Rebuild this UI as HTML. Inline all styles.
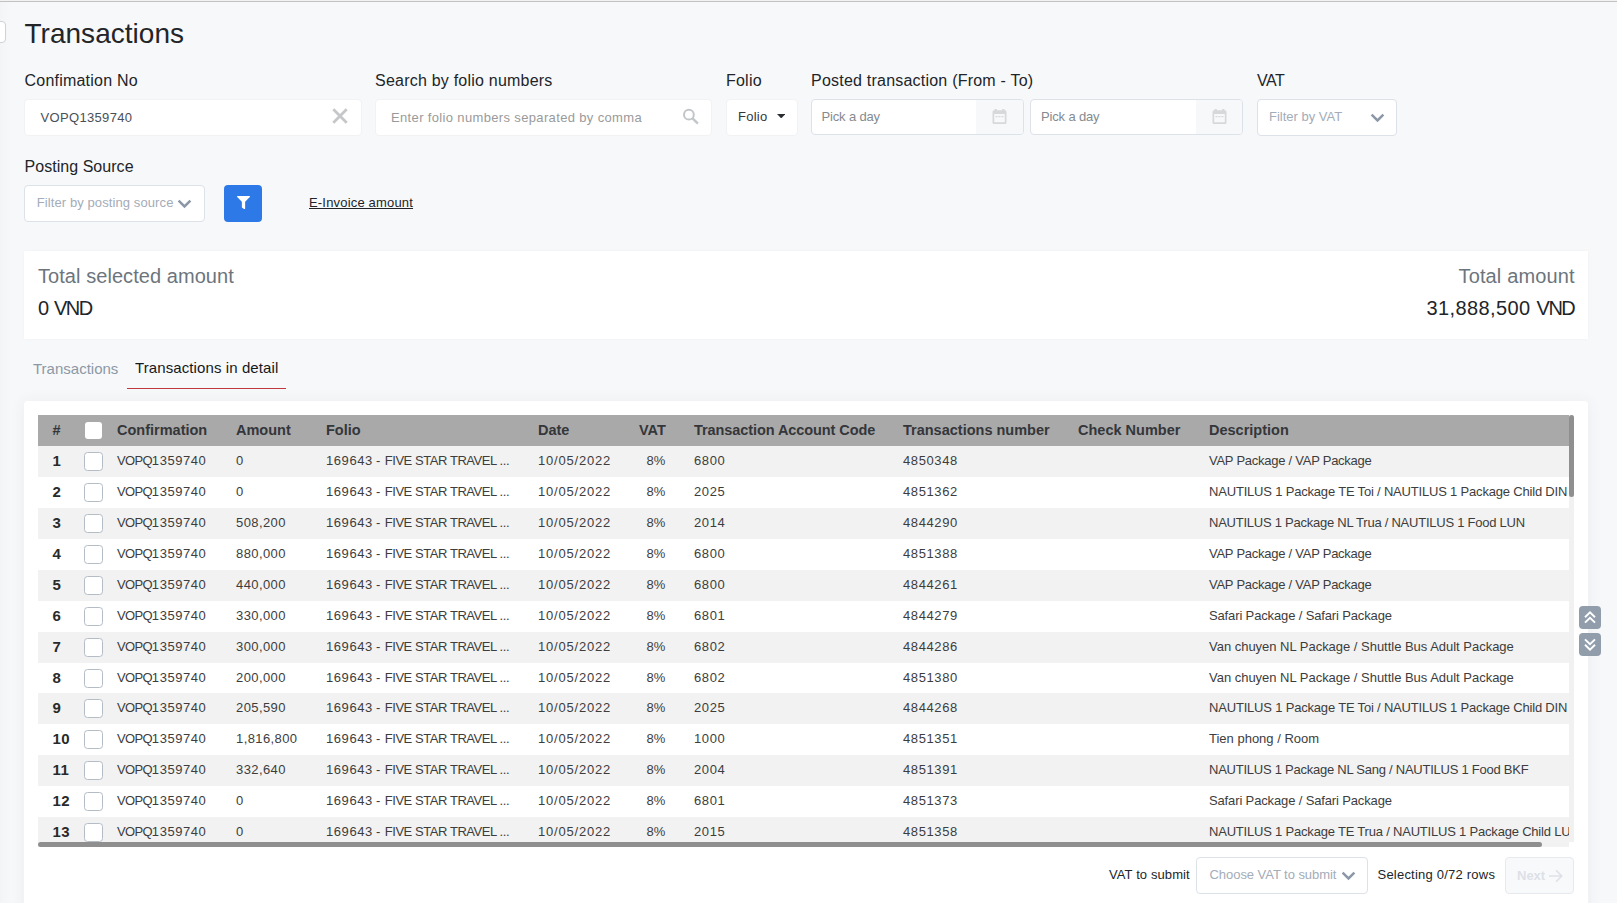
<!DOCTYPE html>
<html lang="en">
<head>
<meta charset="utf-8">
<title>Transactions</title>
<style>
*{box-sizing:border-box;margin:0;padding:0}
html,body{width:1617px;height:903px;overflow:hidden}
body{background:#f7f8fa;font-family:"Liberation Sans",sans-serif;color:#212529;position:relative}
.abs{position:absolute}
.topline{position:absolute;left:0;top:0;width:1617px;height:2px;background:linear-gradient(#f2f2f2 0 1px,#c2c2c2 1px 2px)}
.leftbox{position:absolute;left:-10px;top:21px;width:16px;height:22px;background:#fff;border:1px solid #ced2d6;border-radius:4px}
h1{position:absolute;left:24.5px;top:18px;font-size:28px;font-weight:400;line-height:32px;letter-spacing:.02px;color:#232528;white-space:nowrap}
.lbl{position:absolute;font-size:16px;line-height:20px;color:#212529;white-space:nowrap;letter-spacing:.22px}
.inp{position:absolute;background:#fff;border:1px solid #f0f2f4;border-radius:4px;height:37px;top:99px}
.v{position:absolute;left:16px;top:10px;font-size:13px;line-height:16px;color:#495057;white-space:nowrap;letter-spacing:.33px}
.ph{color:#9a9a9a}
.sel{position:absolute;background:#fff;border:1px solid #dde1e8;border-radius:4px;height:37px}
.card{position:absolute;background:#fff;border-radius:4px}
.sum{position:absolute;font-size:20px;line-height:24px;white-space:nowrap}
.tab{position:absolute;font-size:15px;line-height:20px;white-space:nowrap}
/* table */
.tbl{position:absolute;left:38px;top:415px;width:1536px;height:432px;overflow:hidden}
.th{position:absolute;left:0;top:0;width:1531px;height:31px;background:#a9a9a9}
.th span{position:absolute;top:6px;font-size:14.5px;line-height:18px;font-weight:700;color:#34363a;white-space:nowrap}
.r{position:absolute;left:0;width:1531px;height:31px;background:#fff;overflow:hidden}
.r:nth-of-type(even){background:#f2f2f2}
.c{position:absolute;top:7px;font-size:13px;line-height:16px;color:#3d3d3d;white-space:nowrap}
.n{left:14.5px;font-size:15px;font-weight:700;top:7px;color:#2a2a2a;letter-spacing:.5px}
.cb{position:absolute;left:46px;top:6px;width:18.5px;height:18.5px;border:1px solid #b4bcc6;border-radius:3.5px;background:#fff}
.cf{left:79px;letter-spacing:.54px}.cf b{font-weight:400;letter-spacing:-.68px}
.am{left:198px;letter-spacing:.4px}
.fo{left:288px;letter-spacing:-.44px}.fo b{font-weight:400;letter-spacing:.58px}.fo i{font-style:normal;letter-spacing:.35px}
.da{left:500px;letter-spacing:.8px}
.va{left:608.5px;letter-spacing:0}
.co{left:656px;letter-spacing:.6px}
.tn{left:865px;letter-spacing:.6px}
.de{left:1171px;letter-spacing:-.18px}
.bt{position:absolute;font-size:13px;line-height:16px;color:#212529;white-space:nowrap}
.fl{position:absolute;left:1579px;width:22px;height:23px;background:#919dab;border-radius:4px}
</style>
</head>
<body>
<div class="abs" style="left:0;top:0;width:12px;height:903px;background:linear-gradient(to right,rgba(0,0,0,.014),rgba(0,0,0,0))"></div>
<div class="topline"></div>
<div class="leftbox"></div>
<h1>Transactions</h1>

<div class="lbl" style="left:24.5px;top:71px">Confimation No</div>
<div class="lbl" style="left:375px;top:71px">Search by folio numbers</div>
<div class="lbl" style="left:726px;top:71px">Folio</div>
<div class="lbl" style="left:811px;top:71px">Posted transaction (From - To)</div>
<div class="lbl" style="left:1257px;top:71px;letter-spacing:-.5px">VAT</div>

<div class="inp" style="left:24px;width:338px"><span class="v" style="left:15.5px;top:10px">VOPQ1359740</span>
<svg class="abs" style="left:305px;top:6px" width="20" height="20" viewBox="0 0 20 20"><path d="M3.3 3.3L16.7 16.7M16.7 3.3L3.3 16.7" stroke="#c5c7c9" stroke-width="2.8" fill="none"/></svg></div>
<div class="inp" style="left:375px;width:337px"><span class="v ph" style="left:15px;top:10px;letter-spacing:.35px">Enter folio numbers separated by comma</span>
<svg class="abs" style="left:306px;top:7.5px" width="18" height="18" viewBox="0 0 18 18"><circle cx="6.9" cy="6.7" r="4.9" stroke="#c3c6c9" stroke-width="2" fill="none"/><path d="M10.6 10.4L15.9 15.7" stroke="#c3c6c9" stroke-width="2.4" fill="none"/></svg></div>

<div class="inp" style="left:726px;width:72px"><span class="v" style="left:11px;top:9px;color:#33363a;letter-spacing:.25px">Folio</span>
<svg class="abs" style="left:50px;top:13.6px" width="8.4" height="4.4" viewBox="0 0 8.4 4.4"><path d="M0 0H8.4L4.2 4.4Z" fill="#2b2d30"/></svg></div>

<div class="sel" style="left:811px;top:99px;width:213px;height:36px"><span class="v" style="left:9.5px;top:9px;color:#858a90;letter-spacing:-.15px">Pick a day</span><div class="abs" style="left:164px;top:0;width:47px;height:34px;background:#f7f8fa;border-radius:0 3px 3px 0"><svg class="abs" style="left:16px;top:9px" width="15" height="15" viewBox="0 0 15 15"><path d="M2.6 0h2.2v1.3h5.4V0h2.2v1.3h.6a1.5 1.5 0 0 1 1.5 1.5v10.6a1.5 1.5 0 0 1-1.5 1.5H2a1.5 1.5 0 0 1-1.5-1.5V2.8A1.5 1.5 0 0 1 2 1.3h.6zM2.2 5v8.3h10.6V5z" fill="#d7d8da" fill-rule="evenodd"/><path d="M3.5 7.6h8" stroke="#d7d8da" stroke-width="1.2" stroke-dasharray="2 1" fill="none"/></svg></div></div>
<div class="sel" style="left:1030px;top:99px;width:213px;height:36px"><span class="v" style="left:10px;top:9px;color:#858a90;letter-spacing:-.15px">Pick a day</span><div class="abs" style="left:165px;top:0;width:46px;height:34px;background:#f7f8fa;border-radius:0 3px 3px 0"><svg class="abs" style="left:15.8px;top:9px" width="15" height="15" viewBox="0 0 15 15"><path d="M2.6 0h2.2v1.3h5.4V0h2.2v1.3h.6a1.5 1.5 0 0 1 1.5 1.5v10.6a1.5 1.5 0 0 1-1.5 1.5H2a1.5 1.5 0 0 1-1.5-1.5V2.8A1.5 1.5 0 0 1 2 1.3h.6zM2.2 5v8.3h10.6V5z" fill="#d7d8da" fill-rule="evenodd"/><path d="M3.5 7.6h8" stroke="#d7d8da" stroke-width="1.2" stroke-dasharray="2 1" fill="none"/></svg></div></div>
<div class="sel" style="left:1257px;top:99px;width:140px"><span class="v" style="left:11px;top:9px;color:#a3acb8;letter-spacing:0">Filter by VAT</span><svg class="abs" style="left:111.7px;top:12.6px" width="15" height="10" viewBox="0 0 15 10"><path d="M1.6 1.6L7.5 7.4L13.4 1.6" stroke="#8c98a8" stroke-width="2.5" fill="none"/></svg></div>

<div class="lbl" style="left:24.5px;top:157px;letter-spacing:.04px">Posting Source</div>
<div class="sel" style="left:24px;top:185px;width:181px"><span class="v" style="left:11.7px;top:9px;color:#a3acb8;letter-spacing:.1px">Filter by posting source</span><svg class="abs" style="left:152.4px;top:12.5px" width="15" height="10" viewBox="0 0 15 10"><path d="M1.6 1.6L7.5 7.4L13.4 1.6" stroke="#8c98a8" stroke-width="2.5" fill="none"/></svg></div>
<div class="abs" style="left:224px;top:185px;width:38px;height:37px;background:#2e79e8;border-radius:4px"><svg class="abs" style="left:13.4px;top:11px" width="13" height="13.2" viewBox="0 0 512 512" preserveAspectRatio="none"><path d="M487.976 0H24.028C2.71 0-8.047 25.866 7.058 40.971L192 225.941V432c0 7.831 3.821 15.17 10.237 19.662l80 55.98C298.02 518.69 320 507.493 320 487.98V225.941l184.947-184.97C520.021 25.896 509.338 0 487.976 0z" fill="#fff"/></svg></div>
<div class="abs" style="left:309px;top:195px;font-size:13px;line-height:16px;color:#212529;text-decoration:underline;white-space:nowrap;letter-spacing:.18px">E-Invoice amount</div>

<div class="card" style="left:24px;top:251px;width:1564px;height:88px;border-radius:0;box-shadow:0 0 3px 0 rgba(69,65,78,.03)"></div>
<div class="sum" style="left:38px;top:264px;color:#6c757d;letter-spacing:.06px">Total selected amount</div>
<div class="sum" style="left:38px;top:296px;color:#212529;letter-spacing:-.4px">0 <span style="letter-spacing:-1.5px">VND</span></div>
<div class="sum" style="left:1458.5px;top:264px;color:#6c757d;letter-spacing:.14px">Total amount</div>
<div class="sum" style="left:1426.5px;top:296px;color:#212529;letter-spacing:.4px">31,888,500 <span style="letter-spacing:-1.5px">VND</span></div>

<div class="tab" style="left:33px;top:359px;color:#8c98a5">Transactions</div>
<div class="tab" style="left:135px;top:358px;color:#16181b;letter-spacing:.1px">Transactions in detail</div>
<div class="abs" style="left:127px;top:388px;width:159px;height:1px;background:#c0393f"></div>

<div class="card" style="left:24px;top:401px;width:1564px;height:520px;box-shadow:0 1px 15px 1px rgba(69,65,78,.06)"></div>
<div class="abs" style="left:1569px;top:415px;width:5px;height:427px;background:#f1f1f1"></div>
<div class="abs" style="left:38px;top:842px;width:1531px;height:5px;background:#f1f1f1"></div>
<div class="tbl">
<div class="th"><span style="left:14.5px">#</span><i class="abs" style="left:47px;top:7px;width:17px;height:17px;background:#fff;border-radius:3px"></i><span style="left:79px">Confirmation</span><span style="left:198px">Amount</span><span style="left:288px">Folio</span><span style="left:500px">Date</span><span style="left:601px">VAT</span><span style="left:656px;letter-spacing:-.08px">Transaction Account Code</span><span style="left:865px">Transactions number</span><span style="left:1040px">Check Number</span><span style="left:1171px">Description</span></div>
<div class="r" style="top:31px"><span class="c n">1</span><span class="cb"></span><span class="c cf"><b>VOPQ</b>1359740</span><span class="c am">0</span><span class="c fo"><b>169643</b> <i>- </i>FIVE STAR TRAVEL ...</span><span class="c da">10/05/2022</span><span class="c va">8%</span><span class="c co">6800</span><span class="c tn">4850348</span><span class="c de" style="letter-spacing:-0.253px">VAP Package / VAP Package</span></div>
<div class="r" style="top:62px"><span class="c n">2</span><span class="cb"></span><span class="c cf"><b>VOPQ</b>1359740</span><span class="c am">0</span><span class="c fo"><b>169643</b> <i>- </i>FIVE STAR TRAVEL ...</span><span class="c da">10/05/2022</span><span class="c va">8%</span><span class="c co">2025</span><span class="c tn">4851362</span><span class="c de" style="letter-spacing:-0.188px">NAUTILUS 1 Package TE Toi / NAUTILUS 1 Package Child DIN</span></div>
<div class="r" style="top:93px"><span class="c n">3</span><span class="cb"></span><span class="c cf"><b>VOPQ</b>1359740</span><span class="c am">508,200</span><span class="c fo"><b>169643</b> <i>- </i>FIVE STAR TRAVEL ...</span><span class="c da">10/05/2022</span><span class="c va">8%</span><span class="c co">2014</span><span class="c tn">4844290</span><span class="c de" style="letter-spacing:-0.244px">NAUTILUS 1 Package NL Trua / NAUTILUS 1 Food LUN</span></div>
<div class="r" style="top:124px"><span class="c n">4</span><span class="cb"></span><span class="c cf"><b>VOPQ</b>1359740</span><span class="c am">880,000</span><span class="c fo"><b>169643</b> <i>- </i>FIVE STAR TRAVEL ...</span><span class="c da">10/05/2022</span><span class="c va">8%</span><span class="c co">6800</span><span class="c tn">4851388</span><span class="c de" style="letter-spacing:-0.253px">VAP Package / VAP Package</span></div>
<div class="r" style="top:155px"><span class="c n">5</span><span class="cb"></span><span class="c cf"><b>VOPQ</b>1359740</span><span class="c am">440,000</span><span class="c fo"><b>169643</b> <i>- </i>FIVE STAR TRAVEL ...</span><span class="c da">10/05/2022</span><span class="c va">8%</span><span class="c co">6800</span><span class="c tn">4844261</span><span class="c de" style="letter-spacing:-0.253px">VAP Package / VAP Package</span></div>
<div class="r" style="top:186px"><span class="c n">6</span><span class="cb"></span><span class="c cf"><b>VOPQ</b>1359740</span><span class="c am">330,000</span><span class="c fo"><b>169643</b> <i>- </i>FIVE STAR TRAVEL ...</span><span class="c da">10/05/2022</span><span class="c va">8%</span><span class="c co">6801</span><span class="c tn">4844279</span><span class="c de" style="letter-spacing:-0.139px">Safari Package / Safari Package</span></div>
<div class="r" style="top:217px"><span class="c n">7</span><span class="cb"></span><span class="c cf"><b>VOPQ</b>1359740</span><span class="c am">300,000</span><span class="c fo"><b>169643</b> <i>- </i>FIVE STAR TRAVEL ...</span><span class="c da">10/05/2022</span><span class="c va">8%</span><span class="c co">6802</span><span class="c tn">4844286</span><span class="c de" style="letter-spacing:-0.019px">Van chuyen NL Package / Shuttle Bus Adult Package</span></div>
<div class="r" style="top:248px"><span class="c n">8</span><span class="cb"></span><span class="c cf"><b>VOPQ</b>1359740</span><span class="c am">200,000</span><span class="c fo"><b>169643</b> <i>- </i>FIVE STAR TRAVEL ...</span><span class="c da">10/05/2022</span><span class="c va">8%</span><span class="c co">6802</span><span class="c tn">4851380</span><span class="c de" style="letter-spacing:-0.019px">Van chuyen NL Package / Shuttle Bus Adult Package</span></div>
<div class="r" style="top:278px"><span class="c n">9</span><span class="cb"></span><span class="c cf"><b>VOPQ</b>1359740</span><span class="c am">205,590</span><span class="c fo"><b>169643</b> <i>- </i>FIVE STAR TRAVEL ...</span><span class="c da">10/05/2022</span><span class="c va">8%</span><span class="c co">2025</span><span class="c tn">4844268</span><span class="c de" style="letter-spacing:-0.188px">NAUTILUS 1 Package TE Toi / NAUTILUS 1 Package Child DIN</span></div>
<div class="r" style="top:309px"><span class="c n">10</span><span class="cb"></span><span class="c cf"><b>VOPQ</b>1359740</span><span class="c am">1,816,800</span><span class="c fo"><b>169643</b> <i>- </i>FIVE STAR TRAVEL ...</span><span class="c da">10/05/2022</span><span class="c va">8%</span><span class="c co">1000</span><span class="c tn">4851351</span><span class="c de" style="letter-spacing:0.000px">Tien phong / Room</span></div>
<div class="r" style="top:340px"><span class="c n">11</span><span class="cb"></span><span class="c cf"><b>VOPQ</b>1359740</span><span class="c am">332,640</span><span class="c fo"><b>169643</b> <i>- </i>FIVE STAR TRAVEL ...</span><span class="c da">10/05/2022</span><span class="c va">8%</span><span class="c co">2004</span><span class="c tn">4851391</span><span class="c de" style="letter-spacing:-0.246px">NAUTILUS 1 Package NL Sang / NAUTILUS 1 Food BKF</span></div>
<div class="r" style="top:371px"><span class="c n">12</span><span class="cb"></span><span class="c cf"><b>VOPQ</b>1359740</span><span class="c am">0</span><span class="c fo"><b>169643</b> <i>- </i>FIVE STAR TRAVEL ...</span><span class="c da">10/05/2022</span><span class="c va">8%</span><span class="c co">6801</span><span class="c tn">4851373</span><span class="c de" style="letter-spacing:-0.139px">Safari Package / Safari Package</span></div>
<div class="r" style="top:402px"><span class="c n">13</span><span class="cb"></span><span class="c cf"><b>VOPQ</b>1359740</span><span class="c am">0</span><span class="c fo"><b>169643</b> <i>- </i>FIVE STAR TRAVEL ...</span><span class="c da">10/05/2022</span><span class="c va">8%</span><span class="c co">2015</span><span class="c tn">4851358</span><span class="c de" style="letter-spacing:-0.200px">NAUTILUS 1 Package TE Trua / NAUTILUS 1 Package Child LUN</span></div>
</div>
<div class="abs" style="left:1569px;top:415px;width:5px;height:81.5px;background:#8f8f8f;border-radius:3px"></div>
<div class="abs" style="left:38px;top:842px;width:1504px;height:5px;background:#8f8f8f;border-radius:3px"></div>

<div class="bt" style="left:1109px;top:867px;letter-spacing:.1px">VAT to submit</div>
<div class="sel" style="left:1196px;top:857px;width:172px"><span class="v" style="left:12.5px;top:9px;color:#a3acb8;letter-spacing:-.05px">Choose VAT to submit</span><svg class="abs" style="left:144px;top:12.8px" width="15" height="10" viewBox="0 0 15 10"><path d="M1.6 1.6L7.5 7.4L13.4 1.6" stroke="#8c98a8" stroke-width="2.5" fill="none"/></svg></div>
<div class="bt" style="left:1377.5px;top:867px;letter-spacing:.22px">Selecting 0/72 rows</div>
<div class="abs" style="left:1505px;top:857px;width:69px;height:37px;background:#f8f9fb;border:1px solid #e6e9ee;border-radius:4px"><span class="abs" style="left:11px;top:9.5px;font-size:13px;font-weight:700;color:#dde1e7;line-height:16px">Next</span><svg class="abs" style="left:42px;top:11px" width="15" height="14" viewBox="0 0 15 14"><path d="M1 7H13.5M8 1.2L13.8 7L8 12.8" stroke="#dde1e7" stroke-width="1.6" fill="none"/></svg></div>

<div class="fl" style="top:606px"><svg class="abs" style="left:5px;top:5px" width="12" height="13" viewBox="0 0 12 13"><path d="M1 6.2L6 1.4L11 6.2M1 11.6L6 6.8L11 11.6" stroke="#fff" stroke-width="1.9" fill="none"/></svg></div>
<div class="fl" style="top:633px"><svg class="abs" style="left:5px;top:5px" width="12" height="13" viewBox="0 0 12 13"><path d="M1 1.4L6 6.2L11 1.4M1 6.8L6 11.6L11 6.8" stroke="#fff" stroke-width="1.9" fill="none"/></svg></div>
</body>
</html>
